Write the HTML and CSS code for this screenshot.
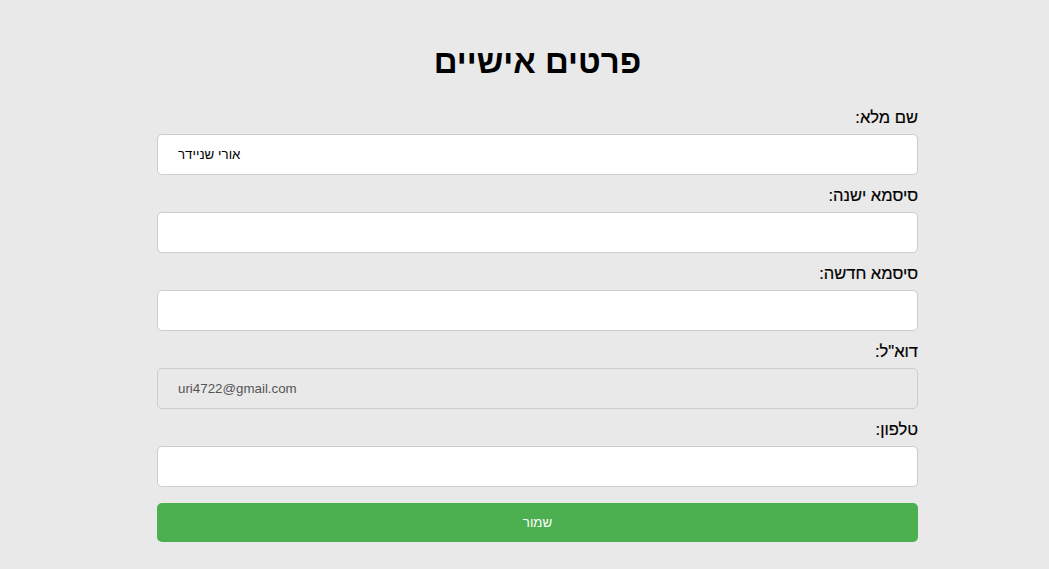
FILE: index.html
```html
<!DOCTYPE html>
<html lang="he" dir="rtl">
<head>
<meta charset="utf-8">
<title>פרטים אישיים</title>
<link rel="stylesheet" href="styles.css">
</head>
<body>
<main class="page">
  <h1 class="title">פרטים אישיים</h1>
  <form class="form">
    <label class="label" for="name">שם מלא:</label>
    <input class="field" id="name" type="text" value="אורי שניידר">
    <label class="label" for="old">סיסמא ישנה:</label>
    <input class="field" id="old" type="password">
    <label class="label" for="new">סיסמא חדשה:</label>
    <input class="field" id="new" type="password">
    <label class="label" for="mail">דוא"ל:</label>
    <input class="field field-disabled" id="mail" type="email" value="uri4722@gmail.com" disabled>
    <label class="label" for="phone">טלפון:</label>
    <input class="field" id="phone" type="tel">
    <button class="save" type="button">שמור</button>
  </form>
</main>
</body>
</html>
```
FILE: styles.css
```css
html, body {
  margin: 0;
  padding: 0;
  background: #e9e9e9;
}
body {
  font-family: "Liberation Sans", Arial, sans-serif;
  color: #000;
}
.page {
  width: 761px;
  margin: 0 131px 0 auto;
  padding-top: 42px;
}
.title {
  margin: 0 0 25px;
  text-align: center;
  font-size: 33px;
  font-weight: bold;
  line-height: 40px;
  color: #000;
}
.form {
  display: flex;
  flex-direction: column;
}
.label {
  font-size: 16.5px;
  line-height: 20px;
  margin-bottom: 7px;
  color: #000;
  -webkit-text-stroke: 0.2px #000;
}
.field {
  box-sizing: border-box;
  height: 41px;
  width: 100%;
  margin: 0 0 10px;
  padding: 0 20px;
  border: 1px solid #ccc;
  border-radius: 5px;
  background: #fff;
  font-family: "Liberation Sans", Arial, sans-serif;
  font-size: 13.33px;
  color: #000;
  direction: ltr;
  text-align: left;
}
.field-disabled {
  background: #e9e9e9;
  color: #545454;
}
.save {
  margin-top: 6px;
  height: 39px;
  border: 0;
  border-radius: 5px;
  background: #4caf50;
  color: #fff;
  font-family: "Liberation Sans", Arial, sans-serif;
  font-size: 13.33px;
}
```
